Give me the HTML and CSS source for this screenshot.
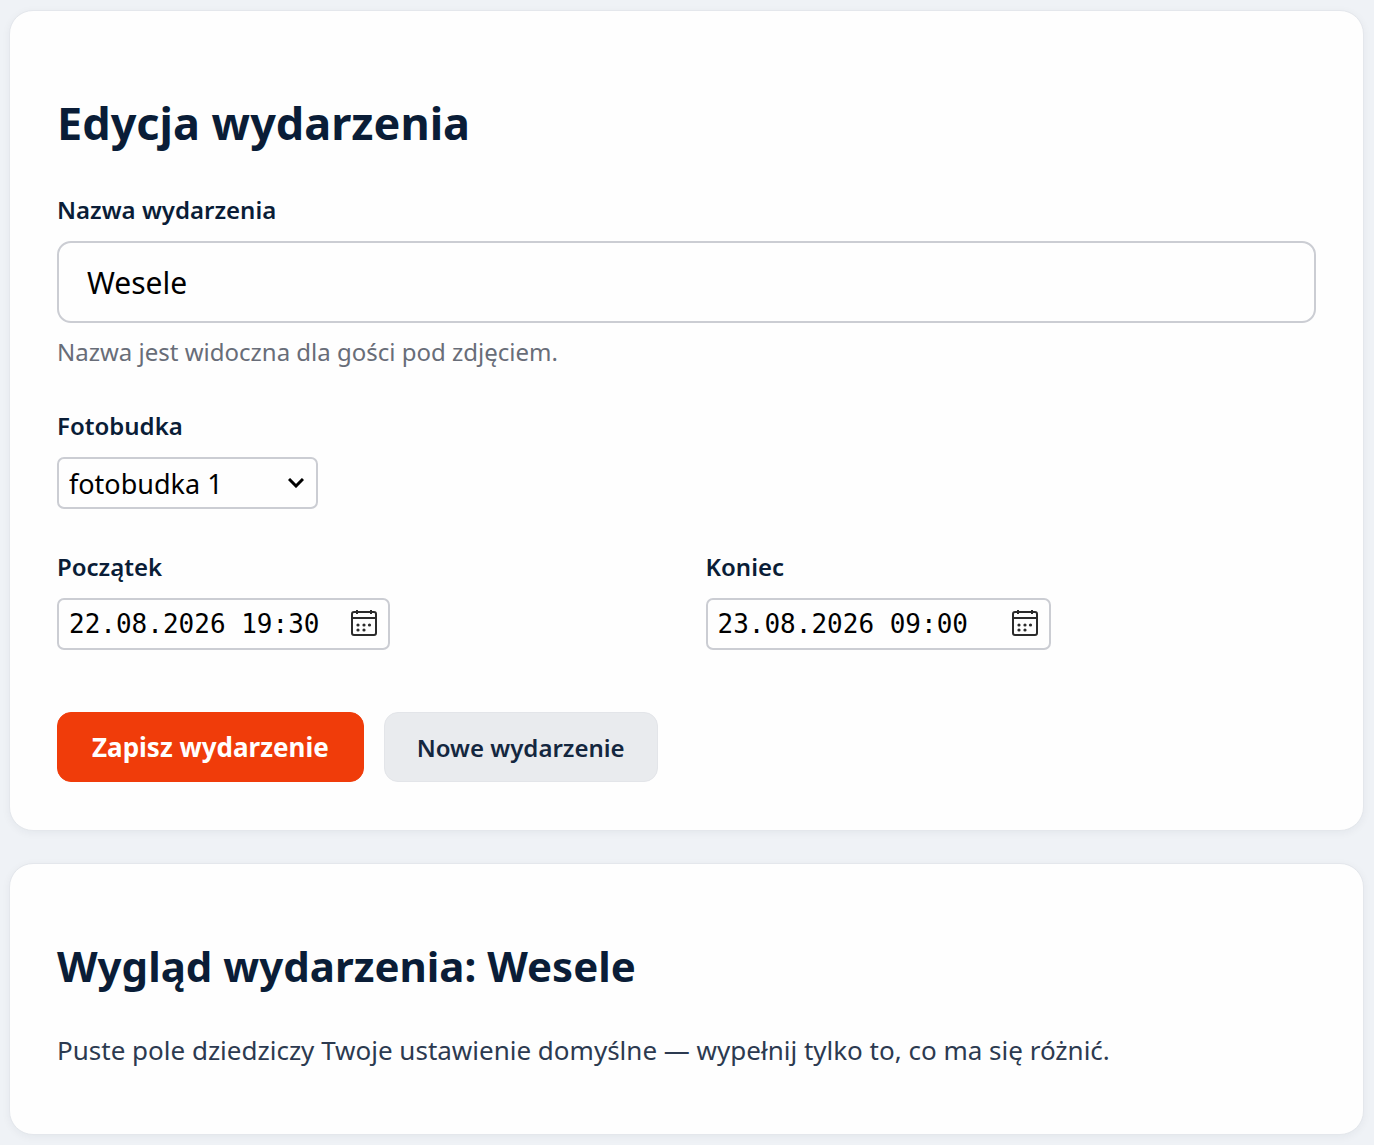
FILE: index.html
```html
<!DOCTYPE html>
<html lang="pl">
<head>
    <meta charset="UTF-8">
    <meta name="viewport" content="width=device-width, initial-scale=1.0">
    <title>Edycja wydarzenia</title>
    <link rel="stylesheet" href="styles.css">
</head>
<body>
    <!-- Edycja wydarzenia -->
    <section class="card">
        <h1>Edycja wydarzenia</h1>
        <form id="event-form">
            <div class="field">
                <label for="event-name">Nazwa wydarzenia</label>
                <input type="text" id="event-name" class="input-name" value="Wesele">
                <p class="hint">Nazwa jest widoczna dla gości pod zdjęciem.</p>
            </div>

            <div class="field">
                <label for="booth">Fotobudka</label>
                <div class="control control-select">
                    <select id="booth">
                        <option>fotobudka 1</option>
                    </select>
                    <svg class="chevron" viewBox="0 0 16 10" aria-hidden="true">
                        <path d="M1 1l7 7 7-7"/>
                    </svg>
                </div>
            </div>

            <div class="row">
                <div class="field">
                    <label for="start">Początek</label>
                    <div class="control control-start">
                        <input type="text" id="start" class="input-date" value="22.08.2026 19:30">
                        <button type="button" class="calendar" aria-label="Wybierz początek">
                            <svg viewBox="0 0 26 28" aria-hidden="true">
                                <rect x="1" y="3" width="24" height="23" rx="2"/>
                                <path d="M1 9h24M6 1v4M20 1v4"/>
                                <g class="dots">
                                    <circle cx="7" cy="16" r="1.6"/><circle cx="13" cy="16" r="1.6"/><circle cx="18.5" cy="16" r="1.6"/>
                                    <circle cx="7" cy="21" r="1.6"/><circle cx="13" cy="21" r="1.6"/>
                                </g>
                            </svg>
                        </button>
                    </div>
                </div>
                <div class="field">
                    <label for="end">Koniec</label>
                    <div class="control control-end">
                        <input type="text" id="end" class="input-date" value="23.08.2026 09:00">
                        <button type="button" class="calendar" aria-label="Wybierz koniec">
                            <svg viewBox="0 0 26 28" aria-hidden="true">
                                <rect x="1" y="3" width="24" height="23" rx="2"/>
                                <path d="M1 9h24M6 1v4M20 1v4"/>
                                <g class="dots">
                                    <circle cx="7" cy="16" r="1.6"/><circle cx="13" cy="16" r="1.6"/><circle cx="18.5" cy="16" r="1.6"/>
                                    <circle cx="7" cy="21" r="1.6"/><circle cx="13" cy="21" r="1.6"/>
                                </g>
                            </svg>
                        </button>
                    </div>
                </div>
            </div>

            <div class="actions">
                <button type="submit" class="btn btn-primary">Zapisz wydarzenie</button>
                <button type="button" class="btn btn-secondary">Nowe wydarzenie</button>
            </div>
        </form>
    </section>

    <!-- Wygląd wydarzenia -->
    <section class="card">
        <h2>Wygląd wydarzenia: Wesele</h2>
        <p class="lead">Puste pole dziedziczy Twoje ustawienie domyślne — wypełnij tylko to, co ma się różnić.</p>
    </section>
</body>
</html>
```
FILE: styles.css
```css
* {
    box-sizing: border-box;
}
body {
    margin: 0;
    padding: 10px 10px 10px 9px;
    background-color: #eff2f6;
    color: #0a1d37;
    font-family: "Noto Sans", "Open Sans", sans-serif;
}
.card {
    margin-bottom: 32px;
    padding: 48px 47px;
    background-color: #fefefe;
    border: 1px solid #e4e7ec;
    border-radius: 24px;
    box-shadow: 0 2px 8px rgba(16, 32, 56, 0.05);
}
.card:last-child {
    margin-bottom: 0;
}
h1, h2 {
    margin: 32px 0 37px;
    font-size: 45px;
    line-height: 64px;
    font-weight: 700;
}
h2 {
    margin: 22px 0 32px;
    font-size: 42px;
}
label {
    display: block;
    margin-bottom: 13px;
    font-size: 24px;
    line-height: 36px;
    font-weight: 600;
}
.field {
    margin-bottom: 38px;
}
input, select {
    width: 100%;
    color: #000;
    background-color: #fefefe;
    border: 2px solid #cbcdd3;
}
.input-name {
    display: block;
    height: 82px;
    padding: 0 28px;
    border-radius: 14px;
    font-family: inherit;
    font-size: 30px;
}
.hint {
    margin: 11px 0 0;
    color: #686d78;
    font-size: 24px;
    line-height: 36px;
}
.control {
    position: relative;
    max-width: 100%;
}
.control-select {
    width: 261px;
}
.control-start {
    width: 333px;
}
.control-end {
    width: 345px;
}
select, .input-date {
    display: block;
    height: 52px;
    padding: 0 10px;
    border-radius: 7px;
}
select {
    appearance: none;
    font-family: inherit;
    font-size: 27px;
}
.input-date {
    font-family: "DejaVu Sans Mono", monospace;
    font-size: 26px;
}
.chevron {
    position: absolute;
    right: 14px;
    top: 21px;
    width: 16px;
    height: 10px;
    fill: none;
    stroke: #000;
    stroke-width: 3;
    pointer-events: none;
}
.calendar {
    position: absolute;
    right: 13px;
    top: 11px;
    padding: 0;
    border: none;
    background: none;
    cursor: pointer;
}
.calendar svg {
    display: block;
    width: 26px;
    height: 28px;
    fill: none;
    stroke: #2b2b2b;
    stroke-width: 2;
}
.calendar .dots {
    fill: #2b2b2b;
    stroke: none;
}
.row {
    display: grid;
    grid-template-columns: 1fr 1fr;
    gap: 38px;
    margin-top: 40px;
}
.actions {
    display: flex;
    flex-wrap: wrap;
    gap: 20px;
    margin-top: 24px;
}
.btn {
    height: 70px;
    padding: 0 32px;
    border: 1px solid #e3e5e9;
    border-radius: 14px;
    font-family: inherit;
    font-size: 24px;
    font-weight: 600;
    cursor: pointer;
}
.btn-primary {
    padding: 0 34px;
    color: #fff;
    background-color: #f03c0a;
    border-color: #f03c0a;
    font-size: 26px;
    font-weight: 700;
}
.btn-secondary {
    color: #14273f;
    background-color: #e9ebee;
}
.lead {
    margin: 0 0 16px;
    color: #2c3a50;
    font-size: 26px;
    line-height: 40px;
}
```
